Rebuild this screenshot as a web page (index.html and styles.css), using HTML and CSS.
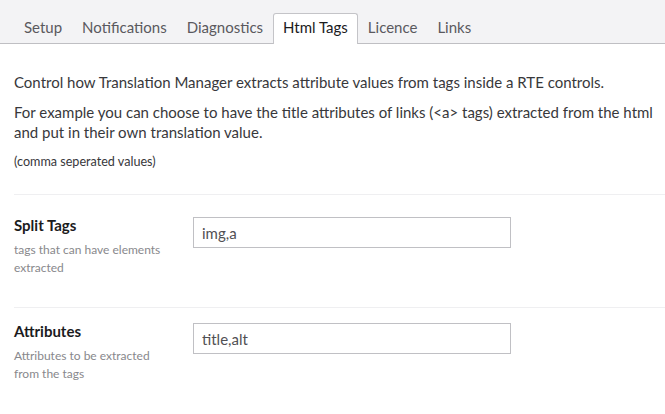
FILE: index.html
```html
<!DOCTYPE html>
<html>
<head>
<meta charset="utf-8">
<link rel="stylesheet" href="styles.css">
</head>
<body>
<div class="tabs">
  <div class="tab">Setup</div>
  <div class="tab">Notifications</div>
  <div class="tab">Diagnostics</div>
  <div class="tab active">Html Tags</div>
  <div class="tab">Licence</div>
  <div class="tab">Links</div>
</div>
<div class="content">
  <div class="intro">
    <p>Control how Translation Manager extracts attribute values from tags inside a RTE controls.</p>
    <p>For example you can choose to have the title attributes of links (&lt;a&gt; tags) extracted from the html and put in their own translation value.</p>
    <p class="small">(comma seperated values)</p>
  </div>
  <div class="group first">
    <div class="label">
      <div class="name">Split Tags</div>
      <div class="desc">tags that can have elements extracted</div>
    </div>
    <div class="field"><input class="input" type="text" value="img,a"></div>
  </div>
  <div class="group second">
    <div class="label">
      <div class="name">Attributes</div>
      <div class="desc">Attributes to be extracted from the tags</div>
    </div>
    <div class="field"><input class="input" type="text" value="title,alt"></div>
  </div>
</div>
</body>
</html>
```
FILE: styles.css
```css
html, body {
  margin: 0;
  padding: 0;
  background: #fff;
  font-family: Lato, "Open Sans", sans-serif;
  color: #38383b;
}
.tabs {
  display: flex;
  align-items: flex-end;
  height: 43px;
  padding-left: 14px;
  background: #f3f3f5;
  border-bottom: 1px solid #bfbfc3;
}
.tab {
  font-size: 15px;
  line-height: 20px;
  padding: 3px 9px 7px 9px;
  border: 1px solid transparent;
  border-bottom: none;
  border-radius: 3px 3px 0 0;
  margin-bottom: -1px;
  color: #5a595e;
}
.tab.active {
  background: #fff;
  border-color: #c4c4c8;
  color: #1b1b1d;
}
.content {
  padding: 28px 0 0 14px;
}
.intro {
  padding-bottom: 22px;
  border-bottom: 1px solid #efeff1;
}
.intro p {
  margin: 0 0 10px;
  font-size: 15px;
  line-height: 20px;
}
.intro p.small {
  font-size: 12.6px;
  line-height: 20px;
  margin: 0;
}
.group {
  display: grid;
  grid-template-columns: 179px 318px;
  align-items: start;
}
.group.first {
  padding-top: 20px;
  height: 92px;
  border-bottom: 1px solid #efeff1;
}
.group.second {
  padding-top: 13px;
}
.name {
  font-weight: 700;
  font-size: 15px;
  line-height: 20px;
  color: #1b1b1d;
}
.desc {
  margin-top: 6px;
  width: 160px;
  font-size: 12px;
  line-height: 18px;
  color: #88888c;
}
.field {
  padding-top: 2px;
}
.input {
  box-sizing: border-box;
  width: 318px;
  height: 31px;
  margin: 0;
  padding: 0 8px;
  border: 1px solid #c0c0c4;
  border-radius: 0;
  font-family: Lato, "Open Sans", sans-serif;
  font-size: 15px;
  color: #515054;
  background: #fff;
  outline: none;
}
```
